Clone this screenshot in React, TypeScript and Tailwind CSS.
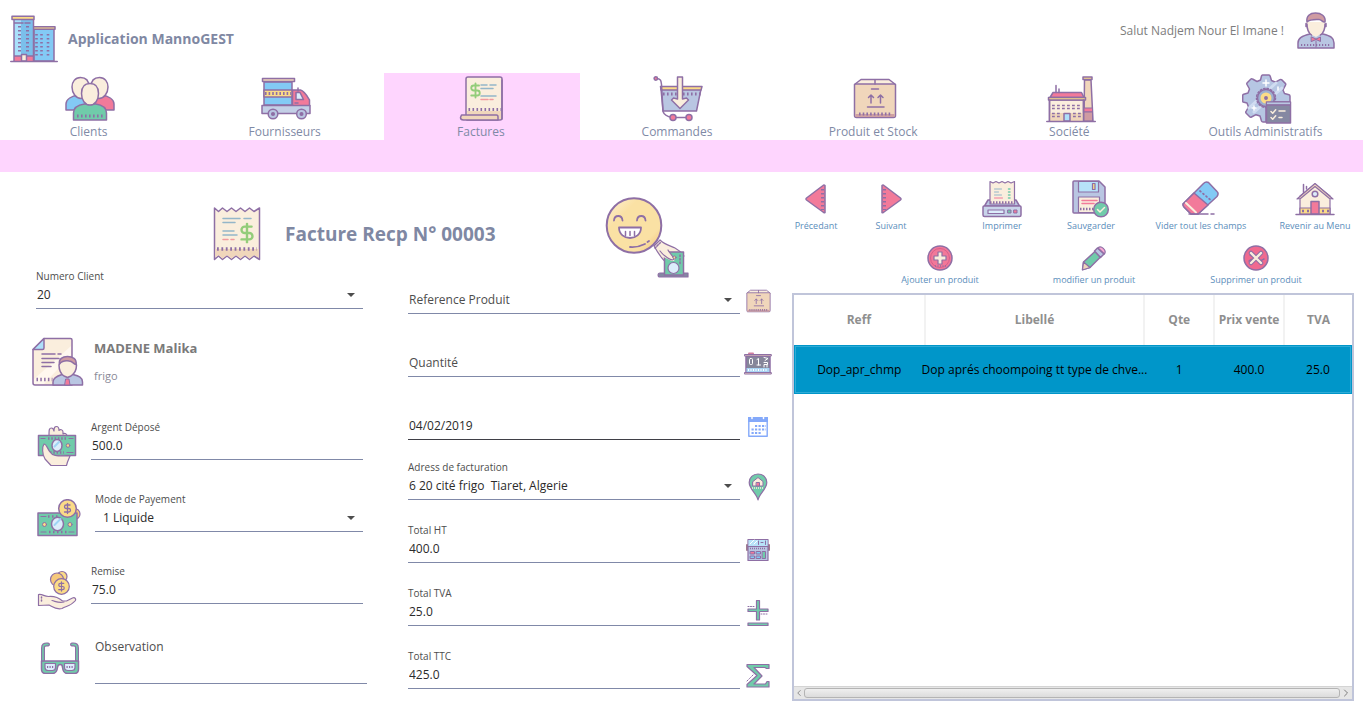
import type { ReactNode } from "react";
import { ChevronLeft, ChevronRight, DollarSign } from "lucide-react";

const INK = "#8e6fa5";
const CREAM = "#faeedd";
const SAND = "#f0d6bb";
const SKY = "#83caf5";
const PALE = "#dcedfb";
const PINK = "#f27a9a";
const GREEN = "#70cbaa";
const GOLD = "#fbdb87";
const STEEL = "#b9c6e2";

function Svg({ w, h, children }: { w: number; h: number; children: ReactNode }) {
  return (
    <svg
      width={w}
      height={h}
      viewBox={`0 0 ${w} ${h}`}
      fill="none"
      stroke={INK}
      strokeWidth={1.5}
      strokeLinejoin="round"
      strokeLinecap="round"
      aria-hidden="true"
      className="block shrink-0"
    >
      {children}
    </svg>
  );
}

function Dashes({ d, width = 3, dash = "1.6 2.4", color = INK }: { d: string; width?: number; dash?: string; color?: string }) {
  return <path d={d} strokeWidth={width} strokeDasharray={dash} strokeLinecap="butt" stroke={color} />;
}

function Dollar({ x, y, size, color }: { x: number; y: number; size: number; color: string }) {
  return <DollarSign x={x} y={y} width={size} height={size} color={color} strokeWidth={2.6} />;
}

const BuildingIcon = () => (
  <Svg w={48} h={48}>
    <path d="M24 14h20v32H24z" fill={SKY} />
    <path d="M23 11.7h22v2.6H23z" fill={GOLD} />
    <path d="M4 5h19.500v41H4z" fill="#7bbfeb" stroke="none" />
    <path d="M4 5h7v36H4z" fill="#a9e0fb" stroke="none" />
    <path d="M4 41h19.500v5H4z" fill={PINK} stroke="none" />
    <path d="M4 5v41M23.500 5v41M5 8h8M15 8h5M4 41h7M15 41h8" />
    <path d="M2 1.200h22v3.200H2z" fill={GOLD} />
    <path d="M11.500 39.500h5V46h-5z" fill={CREAM} />
    <Dashes d="M9.500 11v27M17.500 11v27" dash="1.500 2.500" width={3} />
    <Dashes d="M26.500 19v23M31.500 19v23M38 19v23" dash="1.500 2.500" width={2.600} />
    <path d="M.8 46.500h46.500" />
  </Svg>
);

const PersonIcon = () => (
  <Svg w={38} h={38}>
    <path d="M1 36v-5c0-5 4-7 12-9h13c8 2 11 4 11 9v5z" fill={STEEL} />
    <path d="M13 22c-3-2-4-6-3.500-12h18.500c.5 6-1 10-4 12l-5 3z" fill={CREAM} stroke="none" />
    <path d="M10 12c0 5 1.500 9 4.500 11M28 12c0 5-1.500 9-4.500 11M9 11.500v3M29 11.500v3" />
    <path d="M10 10C9 4 13 1 18.500 1S29 4 28 10c-3 .5-3-2.500-6-2.500-5 0-9-.5-12 2.500z" fill="#cf9ba2" />
    <path d="M14.500 25l4.500 2 4.500-2v4.500l-4.500-2-4.500 2z" fill={PINK} strokeWidth={1} />
    <Dashes d="M4 33h30" dash="1.200 1.800" width={2} />
    <path d="M19 29v6" strokeWidth={1} />
  </Svg>
);

const ClientsIcon = () => (
  <Svg w={50} h={46}>
    <path d="M1 34v-6c0-5 6-8 12-9l8 4v11z" fill={SKY} />
    <path d="M49 34v-6c0-5-6-8-12-9l-8 4v11z" fill={PINK} />
    <path d="M15.500 1.500C10 1.500 7 6 7 11c0 6 4 11.500 9 11.500S24 17 24 11c0-6-3-9.500-8.500-9.500z" fill={CREAM} />
    <path d="M34.500 1.500C40 1.500 43 6 43 11c0 6-4 11.500-9 11.500S26 17 26 11c0-6 3-9.500 8.500-9.500z" fill={CREAM} />
    <path d="M8.500 44V37c0-5 4-8 11-9h11c7 1 11 4 11 9v7z" fill={GREEN} />
    <path d="M25 7.500c-6 0-8.500 4.500-8.500 10C16.500 24 20 29 25 29s8.500-5 8.500-11.500c0-5.500-2.500-10-8.500-10z" fill={CREAM} />
    <Dashes d="M12 40h27" />
  </Svg>
);

const TruckIcon = () => (
  <Svg w={50} h={43}>
    <path d="M3 5h28v23H3z" fill={SKY} />
    <path d="M1.500 1.500h32v3h-32z" fill={SAND} />
    <path d="M3 13h28v7H3z" fill={GOLD} />
    <Dashes d="M4 16.500h26" dash="1.600 2" />
    <path d="M31.500 13h8c4 1 6 5 9 10v6h-17z" fill={PINK} />
    <path d="M35 15.500h4l3.500 7H35z" fill={PALE} />
    <path d="M1 28.500h48v8H1z" fill="#c3cfe6" />
    <path d="M37 11v3M34 26h3" />
    <circle cx="12" cy="37" r="4.800" fill={STEEL} />
    <circle cx="40.500" cy="37" r="4.800" fill={STEEL} />
    <circle cx="12" cy="37" r="1.300" fill={INK} />
    <circle cx="40.500" cy="37" r="1.300" fill={INK} />
  </Svg>
);

const InvoiceIcon = () => (
  <Svg w={46} h={46}>
    <path d="M7 40V3c0-1.500.5-2 2-2h32c1.500 0 2 .5 2 2v39c0 1.500-.5 2-2 2H8z" fill={CREAM} />
    <path d="M8 35h34v8H9z" fill={SAND} stroke="none" />
    <path d="M43 4v39" />
    <Dollar x={8} y={6} size={17} color="#93cd7a" />
    <path d="M22 9h6M31 9h6M22 12.500h12M22 20h15" stroke="#94b6c9" />
    <path d="M22 23.500h7M31 23.500h3" stroke="#f19a9f" />
    <Dashes d="M9.500 33.500h33" dash="1.600 2.400" />
    <path d="M2.500 39h35c1 0 1.500 1 1.500 2v3H4.500C2 44 1.500 43 1.500 41.500z" fill={SAND} />
  </Svg>
);

const CartIcon = () => (
  <Svg w={50} h={46}>
    <path d="M8 13h40l-4.500 22H10z" fill={STEEL} />
    <path d="M7.500 10.500h41.500l-1 3.500H8z" fill={GOLD} />
    <path d="M4 2.500c4 .5 4 2 4.500 6l1.500 27c1 3 4 5 9 6h16" />
    <circle cx="2.800" cy="2.500" r="1.700" fill={PINK} />
    <Dashes d="M10 18h38" dash="1.600 2.400" />
    <path d="M24.500 1h5v22l4-1 2 2-8.500 8.500L18.500 24l2-2 4 1z" fill={CREAM} />
    <circle cx="20" cy="41.500" r="3" fill={PINK} />
    <circle cx="36" cy="41.500" r="3" fill={PINK} />
  </Svg>
);

const BoxIcon = ({ w = 44, h = 41 }: { w?: number; h?: number }) => (
  <svg width={w} height={h} viewBox="0 0 44 41" fill="none" stroke={INK} strokeWidth="1.500" strokeLinejoin="round" strokeLinecap="round" aria-hidden="true" className="block shrink-0">
    <path d="M1.500 6.500L8 1.500h28l6.500 5" fill={CREAM} />
    <path d="M1.500 7c0-.8.500-1 1.500-1h38c1 0 1.500.2 1.500 1v30.500c0 1.500-.5 2-2 2h-37c-1.500 0-2-.5-2-2z" fill={SAND} />
    <path d="M2.500 36h39v3h-39z" fill="#cfa0a2" stroke="none" />
    <path d="M22 2v4M18.500 11h7M14.500 29h16.500M18 25v-8M27.500 25v-8M15.500 19.500L18 17l2.500 2.500M25 19.500l2.500-2.500 2.500 2.500" />
    <Dashes d="M6 36h33" dash="1.600 2.100" />
  </svg>
);

const FactoryIcon = () => (
  <Svg w={50} h={48}>
    <path d="M38.500 5h6.500l2 41h-9z" fill={SAND} />
    <path d="M38 33h8.500v4H38z" fill={PINK} strokeWidth={1} />
    <path d="M38 37h8.500v9H38z" fill="#cf9ba2" strokeWidth={1} />
    <path d="M37 2h9v2.500h-9z" fill={GOLD} />
    <path d="M7 17.500h28.500l2.500 5H4z" fill={PINK} />
    <path d="M3.500 25h34v21h-34z" fill={CREAM} />
    <path d="M4 38h33v8H4z" fill={SAND} stroke="none" />
    <path d="M2.500 22.500h37v2.500h-37z" fill={GOLD} />
    <path d="M3.500 25v21M37.500 25v21M10 10.500v7M13 14v3.500" />
    <Dashes d="M6 30.500h30M6 33.500h30M6 38.500h10M27 38.500h9M6 41.500h10M27 41.500h9" dash="2.800 2.200" width={1.700} />
    <path d="M18 38.500h6V46h-6z" fill="#aee0fa" />
    <path d="M.8 46.500h48.500" />
  </Svg>
);

const GearIcon = () => (
  <Svg w={50} h={50}>
    <path
      d="M20.500 1h6.500c.8 0 1 .5 1.200 1.200l1.300 4.300 4 1.700 4.500-2.500c.8-.4 1.300-.3 1.800.2l3.500 3.500c.6.600.6 1.200.2 1.800L41 16l1.500 3.500 4.500 1.300c.8.300 1 .7 1 1.400V28H24v20h-3c-.8 0-1.200-.3-1.500-1L18 42l-4-1.300L9.500 43c-.8.400-1.300.3-1.800-.2l-3.500-3.500c-.6-.6-.6-1.200-.2-1.800l2.500-4.500L5 29l-4-1c-.2 0-.3-.5-.3-1.200v-5.300c0-.7.300-1 1-1.200L6 19l1.500-4L5 10.500c-.4-.8-.3-1.300.2-1.800l3.500-3.500c.6-.6 1.200-.6 1.800-.2L15 7.500l3.500-1.500 1-4c.2-.7.500-1 1-1z"
      fill="#b6c6e3"
    />
    <path d="M7 34L34 9M12 38L40 14" stroke="#d0dcf1" strokeWidth={3} />
    <path d="M24 6v6M21 9h6M36 13v3M12 32v4M10 34h4" stroke="#fff" />
    <circle cx="24" cy="24" r="8.500" fill="#9dafd0" />
    <circle cx="24" cy="24" r="9.500" strokeDasharray="1.500 2" />
    <circle cx="24" cy="24" r="4.500" fill={GOLD} stroke={GOLD} strokeWidth={2} />
    <circle cx="24" cy="24" r="1.200" fill={INK} />
    <path d="M24.500 28h24v21h-24z" fill="#8588a2" />
    <path d="M25 28.500h23v2H25z" fill={STEEL} stroke="none" />
    <path d="M25 31h23" />
    <path d="M29 37.500l1.700 1.700 3-3.500M37 37h6M29 43.500l1.700 1.700 3-3.500M37 43.500h3" stroke={CREAM} />
  </Svg>
);

const ReceiptIcon = () => (
  <Svg w={48} h={56}>
    <path d="M1.500 2l4 3.500 4-3.500 4.500 3.500L18.500 2l4.500 3.500L27.500 2l4.500 3.500L36.500 2l4.500 3.500L46.500 2v51.500L41 50l-4.500 3.500L32 50l-4.500 3.500L23 50l-4.500 3.500L14 50l-4.500 3.500-4-3.500-4 3.500z" fill={CREAM} />
    <path d="M2.300 43h43.500v8.500L41 49l-4.500 3.500L32 49l-4.500 3.500L23 49l-4.500 3.500L14 49l-4.500 3.500-4-3.500-3.200 2z" fill={SAND} stroke="none" />
    <path d="M10 12.500h17M31 12.500h7M10 16.500h12M10 25h11M10 29h14" stroke="#94b6c9" />
    <path d="M10 33.500h5M18 33.500h3" stroke="#f19a9f" />
    <Dollar x={23} y={16} size={22} color="#93cd7a" />
    <Dashes d="M4 43h40" width={3.600} dash="1.800 2.600" />
  </Svg>
);

const SmileyCashIcon = () => (
  <Svg w={88} h={82}>
    <defs>
      <linearGradient id="face" x1="0" y1="0" x2="1" y2="1">
        <stop offset="0" stopColor="#fdf0d8" />
        <stop offset=".3" stopColor="#fae1a4" />
        <stop offset=".75" stopColor="#fae1a4" />
        <stop offset="1" stopColor="#f1bd72" />
      </linearGradient>
    </defs>
    <path d="M49 49l6-6c5 5 11 6 15 8 4 2 6 4 9 8l-16 8c-6-4-10-11-14-18z" fill={CREAM} strokeWidth={1.200} />
    <path d="M50 51l6-6" strokeDasharray="1.500 1.500" />
    <path d="M55 76h28v4H55c-2.500 0-2.500-4 0-4z" fill="#8588a2" strokeWidth={1.200} />
    <path d="M59.500 55h19v23h-19z" fill={GREEN} />
    <circle cx="68.500" cy="71" r="5.500" fill={PALE} strokeWidth={1.200} />
    <path d="M57 50c4 1 6 4 9 7l4 5c0 2-3 3-5 1l-9-4z" fill={CREAM} stroke="none" />
    <path d="M63 53c2 4 5 6 6 9-2 3-10-3-14-8" strokeWidth={1.200} />
    <circle cx="69.500" cy="60.500" r="1.500" fill={GOLD} strokeWidth={1} />
    <path d="M75 58v10" strokeDasharray="1.500 2" />
    <circle cx="29" cy="28.500" r="27.300" fill="url(#face)" strokeWidth={2} />
    <path d="M9 23.500c.5-6 8-6 8.500 0M32 23.500c.5-6 8-6 8.500 0M25 50c6 .5 10-.5 15-3M42.500 45l1.500-1" strokeWidth={1.800} />
    <path d="M14 30.500h22c0 14-22 14-22 0z" fill="#fff" strokeWidth={1.800} />
    <path d="M20.500 34.500v4M25 34.500v4M29.500 34.500v4" strokeWidth={1.500} />
  </Svg>
);

const ArrowIcon = ({ flip = false }: { flip?: boolean }) => (
  <Svg w={22} h={30}>
    <g transform={flip ? "matrix(-1 0 0 1 22 0)" : undefined}>
      <path d="M20 1.500v27c-1 .5-1.500 0-2-.5L1.500 16c-.7-.6-.7-1.400 0-2L18 1.500c.5-.5 1.500-.5 2 0z" fill={PINK} />
      <Dashes d="M17.500 5v21" width={3} dash="1.500 2.500" />
    </g>
  </Svg>
);

const PrinterIcon = () => (
  <Svg w={40} h={38}>
    <path d="M6 20h28l3.500 6H2.500z" fill={STEEL} />
    <path d="M2 26h36c.7 0 1 .5 1 1v8c0 1-.5 1.500-1.500 1.500h-35C1.500 36.500 1 36 1 35v-8c0-.5.300-1 1-1z" fill="#c8d4ea" />
    <path d="M8 24V1.500l3 1.500 3-1.500L17 3l3-1.500L23 3l3-1.500L29 3l3.500-1.500V24z" fill={CREAM} strokeWidth={1.200} />
    <path d="M12.500 9h7M12.500 12h4M12.500 15h7" stroke="#94b6c9" strokeWidth={1} />
    <path d="M12.500 18h8" stroke={PINK} strokeWidth={1} />
    <path d="M26.500 9h1.500M26.500 12h1.500M26.500 15h1.500M26.500 18h1.500" stroke={GREEN} />
    <Dashes d="M8 22.500h25" width={2.500} dash="1.500 1.500" />
    <path d="M6 30h16v3.500H6z" fill={PALE} strokeWidth={1.200} />
    <path d="M26 30h3v3h-3z" fill={GREEN} strokeWidth={1} />
    <path d="M32 30h3v3h-3z" fill={PINK} strokeWidth={1} />
  </Svg>
);

const SaveIcon = () => (
  <Svg w={38} h={38}>
    <path d="M2 1h25l6 6v26H2c-.7 0-1-.3-1-1V2c0-.7.300-1 1-1z" fill={STEEL} />
    <path d="M6.500 1.500h20v10.500h-20z" fill="#b7e2f8" strokeWidth={1.200} />
    <path d="M20.500 3.500h2.500v6h-2.500z" fill={GOLD} strokeWidth={1.200} />
    <path d="M6.500 17h21v15.500h-21z" fill={CREAM} strokeWidth={1.200} />
    <path d="M10 20.500h15M10 23.500h12" stroke={PINK} />
    <Dashes d="M8 29h14" width={2.500} dash="1.500 1.500" />
    <circle cx="29" cy="29.500" r="7.300" fill={GREEN} />
    <path d="M25.500 29.500l2.500 2.500 4.500-4.500" stroke={CREAM} />
  </Svg>
);

const EraserIcon = () => (
  <Svg w={38} h={36}>
    <path d="M1 23L21.500 2.500c1.500-1.500 3-2 5-1l8.500 9c1.500 1.500 1.500 3 0 5L16 33H9L2 26c-1-1-1-2-1-3z" fill={SKY} />
    <path d="M1 23l11-11 14 12-10 9H9L2 26c-1-1-1-2-1-3z" fill={PINK} />
    <path d="M4 22l10 9.500" stroke={CREAM} strokeWidth={2} />
    <path d="M18 10l10 8.500" strokeDasharray="1 3" strokeWidth={1.800} />
    <path d="M7 33h19M29 33h3" />
  </Svg>
);

const HomeIcon = () => (
  <Svg w={40} h={34}>
    <path d="M5 14L20 2l15 12v18H5z" fill={CREAM} strokeWidth={1.200} />
    <path d="M5 26h30v6H5z" fill={GOLD} strokeWidth={1.200} />
    <Dashes d="M7 29h27" width={2.500} dash="2 3" />
    <path d="M2 17L20 1.500 38 17l-3.500-.5L20 4.500 5.500 16.500z" fill={SAND} strokeWidth={1.200} />
    <path d="M8.500 10.500v-8M11.500 7v-2.500" />
    <circle cx="20" cy="12" r="2.800" fill={PALE} />
    <path d="M16 19.500h8V32h-8z" fill={PINK} />
    <path d="M1 32.500h38" />
  </Svg>
);

const AddIcon = () => (
  <Svg w={26} h={26}>
    <circle cx="13" cy="13" r="12" fill="#f27899" />
    <circle cx="13" cy="13" r="9.500" strokeWidth={1} stroke="#d65f8d" />
    <Dashes d="M8 21h11" width={1.500} dash="1 1.500" />
    <path d="M11 7h4v4h4v4h-4v4h-4v-4H7v-4h4z" fill={CREAM} strokeWidth={1.200} />
  </Svg>
);

const PencilIcon = () => (
  <Svg w={26} h={26}>
    <path d="M2.500 17L14 6.500l5.500 5.500L9 22.500l-7.500 2z" fill={GREEN} />
    <path d="M2.500 17l6.500 5.500-7.500 2.500z" fill={SAND} strokeWidth={1.200} />
    <path d="M13.500 6l3-3 6.500 6-3.500 3.500z" fill={STEEL} />
    <path d="M17 3c3-3 9 2 6.500 6z" fill="#f7a8d4" strokeWidth={1.200} />
  </Svg>
);

const DeleteIcon = () => (
  <Svg w={26} h={26}>
    <circle cx="13" cy="13" r="12" fill="#f06a90" />
    <path d="M6 16l3-2M17 16l4-2M7 10l3 2" strokeDasharray="1 1" />
    <path d="M8 8l10 10M18 8L8 18" strokeWidth={4.500} />
    <path d="M8 8l10 10M18 8L8 18" stroke={CREAM} strokeWidth={2.400} />
  </Svg>
);

const ProfileIcon = () => (
  <Svg w={52} h={50}>
    <path d="M12 1.500h26.500c1 0 1.500.5 1.500 1.500v45H3c-1.500 0-2-.5-2-2V12.500z" fill={CREAM} />
    <path d="M2 42l37-33v9L12 47H2z" fill="#fff8ef" stroke="none" />
    <path d="M12 1.500V11c0 1-.5 1.500-1.500 1.500H1z" fill="#aee0fa" />
    <path d="M10 17h13M26 17h3M10 21.500h17M10 25.500h12M10 29.500h9" />
    <Dashes d="M4.500 42.500h16" dash="1.500 2.300" width={3.500} />
    <path d="M21 48v-3c0-4 4-6 9-7.500h11c6 1.500 9.500 3 9.500 7.500v3z" fill={STEEL} />
    <path d="M32 36l3.500 4 4-4v-4h-7.500z" fill={CREAM} stroke="none" />
    <path d="M27 28c0 5 2 9 5 11l3.500 1.500L39 39c3-2 5.500-6 5.500-11l-2-5H29z" fill={CREAM} />
    <path d="M27.500 27c-1-5 3-7.500 8-7.500s9.500 2.500 8.500 8c-3-.5-3-3.500-7-3.500-4-.5-7 0-9.500 3z" fill="#cf9ba2" />
    <path d="M34 42h3l1 6h-5z" fill={PINK} strokeWidth={1} />
  </Svg>
);

const DepositIcon = () => (
  <Svg w={40} h={42}>
    <path d="M12 11c0-6 0-8 2.500-8C16 3 16.500 4 17 6c0-3 .5-4.500 2.500-4.500S22 3 22 5.500c1-1.500 4-1 4 1.500v2c2-1.500 4 0 4 2z" fill={CREAM} strokeWidth={1.200} />
    <path d="M1.500 10.500h37v20h-37z" fill={GREEN} />
    <path d="M4 13.500h4M32 13.500h4M30 27.500h6" strokeWidth={1.200} />
    <Dashes d="M11 13.500h18M13 27.500h14" width={2.500} dash="1.500 1.800" />
    <ellipse cx="20" cy="20.500" rx="5" ry="6" fill={PALE} />
    <path d="M17.500 21.500l4.500-4.500" stroke="#9fd4f5" strokeWidth={2} />
    <circle cx="31" cy="20.500" r="1.800" fill={GOLD} strokeWidth={1} />
    <path d="M7 19c2.500 0 3 4 6 8 3 5 10 3.500 20 4l-2.500 6-1 3.500H14L8 34c-3-5-3-12-1-15z" fill={CREAM} strokeWidth={1.200} />
  </Svg>
);

const PaymentIcon = () => (
  <Svg w={44} h={38}>
    <circle cx="37.500" cy="15" r="5.500" fill="#f6c87c" strokeWidth={1.200} />
    <path d="M1 14h39v22.500H1z" fill={GREEN} />
    <path d="M4 17.500h5M4 33h5M32 33h5" strokeWidth={1.200} />
    <Dashes d="M11 17.500h12M12 33h18" width={2.500} dash="1.500 2.500" />
    <ellipse cx="20.500" cy="25" rx="6" ry="6.800" fill={PALE} />
    <path d="M17.500 26l6-6" stroke="#9fd4f5" strokeWidth={2} />
    <circle cx="7.500" cy="25.500" r="2" fill={GOLD} strokeWidth={1} />
    <circle cx="33" cy="25.500" r="2" fill={GOLD} strokeWidth={1} />
    <circle cx="30.500" cy="9.500" r="8.800" fill={GOLD} />
    <Dollar x={24.500} y={3.500} size={12} color={INK} />
  </Svg>
);

const DiscountIcon = () => (
  <Svg w={40} h={40}>
    <circle cx="25" cy="6.500" r="5" fill={GOLD} strokeWidth={1.200} />
    <circle cx="20" cy="9.500" r="6.500" fill="#f6c87c" strokeWidth={1.200} />
    <circle cx="24.500" cy="16.500" r="7.800" fill={GOLD} strokeWidth={1.200} />
    <Dollar x={19} y={11} size={11} color={INK} />
    <path d="M1.500 24.500c5-.5 5 2 10 2 5-.5 10 1 14 4.500h4l6-3c2.500-1 4 1 2.500 3-4 5-9 5-13 7.500-6 1.500-9-1.500-13-3.500l-10.500.5z" fill={CREAM} strokeWidth={1.200} />
    <path d="M15 30.500c4 1 7 3 12 1.500" strokeWidth={1.200} />
    <path d="M4.500 27v6" strokeDasharray="1 2" />
  </Svg>
);

const GlassesIcon = () => (
  <Svg w={40} h={32}>
    <path d="M8 2.500C4 2 3 3.500 3 6v16M32 2.500c4-.5 5 1 5 3.500v16" strokeWidth={4} />
    <path d="M8 2.500C4 2 3 3.500 3 6v16M32 2.500c4-.5 5 1 5 3.500v16" stroke={GREEN} strokeWidth={1.600} />
    <path d="M1.500 19h37v8c0 3-1.500 4.500-4 4.500h-7c-3 0-4.500-2-5-6 0-4-4.500-4-5 0-.5 4-2 6-5 6h-7c-2.500 0-4-1.500-4-4.500z" fill={GREEN} />
    <path d="M5 21.500h10.500v4c0 2-1 3-3 3H8c-2 0-3-1-3-3zM24.500 21.500H35v4c0 2-1 3-3 3h-4c-2 0-3.500-1-3.500-3z" fill={PALE} strokeWidth={1.200} />
    <Dashes d="M7 25h7M26.500 25h7" width={2} dash="1.200 1.300" />
  </Svg>
);

const CounterIcon = () => (
  <Svg w={28} h={24}>
    <path d="M5 1.500h4" stroke="#d27ea0" strokeWidth={2} />
    <path d="M2 4h24v16H2z" fill="#85869a" />
    <path d="M2.500 16h23v4h-23z" fill="#a9d4f4" stroke="none" />
    <Dashes d="M4 18h20" width={2} dash="1 1.500" color="#fff" />
    <path d="M.8 2.500h26.500v1.500H.8zM.8 20.500h26.500V22H.8z" fill={SAND} strokeWidth={1} />
    <rect x="5.500" y="6.500" width="3" height="6" stroke="#fff" strokeWidth={1} rx="1" />
    <path d="M13 7.500l1.500-1v6.500M13 13h3.500" stroke="#fff" strokeWidth={1} />
    <path d="M20 5.500l4 1-3 2M20 10.500h3.500v2H20v2.500M23 12.500V15" stroke="#fff" strokeWidth={1} />
  </Svg>
);

const CalendarIcon = () => (
  <Svg w={20} h={20}>
    <path d="M.8 2h18.400v17.200H.8z" fill="#fff" stroke="#84a9fa" strokeWidth={1.400} />
    <path d="M0 0h20v5H0z" fill="#84a9fa" stroke="none" />
    <path d="M4 .5v1M15.500.5v1" stroke="#fff" />
    <path d="M7 9h11M3.500 12.500H18M3.500 16H14" stroke="#84a9fa" strokeWidth={2} strokeLinecap="butt" strokeDasharray="2.200 1.300" />
  </Svg>
);

const PinIcon = () => (
  <Svg w={20} h={28}>
    <path d="M10 27C9 21 1.200 16 1.200 9.500 1.200 4.500 5 1 10 1s8.800 3.500 8.800 8.500C18.800 16 11 21 10 27z" fill={GREEN} strokeWidth={1.200} />
    <path d="M5 8.500l5-4 5 4v4.500H5z" fill={CREAM} strokeWidth={1} />
    <path d="M8.500 9.500h3V13h-3z" fill={PINK} strokeWidth={1} />
    <Dashes d="M4 15h12" width={1.500} dash="1 1" color={CREAM} />
  </Svg>
);

const CalculatorIcon = () => (
  <Svg w={24} h={24}>
    <path d="M1 7v5M23 7v5" stroke="#a07c8f" strokeWidth={2} />
    <path d="M2 1.500h20v21H2z" fill={STEEL} strokeWidth={1.200} />
    <path d="M2.500 2h19v6h-19z" fill="#b7e2f8" stroke="none" />
    <path d="M4 6l4-4M8 6l3-3" stroke="#fff" strokeWidth={1} />
    <path d="M12.500 3v3.500M15 4.500h2M19.500 3v3.500M2 8.500h20" strokeWidth={1} />
    <Dashes d="M4 10.500h16" width={1.500} dash="1 1" />
    <path d="M4.500 13.500h4v2.500h-4z" fill={PINK} strokeWidth={1} />
    <path d="M10.500 13.500h4v2.500h-4zM4.500 18h4v2.500h-4zM10.500 18h4v2.500h-4z" fill={SKY} strokeWidth={1} />
    <path d="M16.500 13.500h3v7h-3z" fill={GREEN} strokeWidth={1} />
  </Svg>
);

const PlusMinusIcon = () => (
  <Svg w={22} h={28}>
    <path d="M9.500 1.500h3V10h8.500v2.500h-8.500V21h-3v-8.500H1V10h8.500z" fill={GREEN} strokeWidth={1.200} />
    <path d="M1 24h20v2.500H1z" fill={GREEN} strokeWidth={1.200} />
    <path d="M1 7.500h7M14 15h7" strokeDasharray="1 1.500" strokeWidth={1} />
  </Svg>
);

const SigmaIcon = () => (
  <Svg w={26} h={26}>
    <path d="M2 1.500h22v4h-2.500L20 4.500H9l8 8.500-8 8h11.500l1.500-2.500h2v5.500H2v-2.500l10-9L2 3.500z" fill={GREEN} strokeWidth={1.200} />
    <path d="M2 18l7-7" strokeDasharray="1 1.500" strokeWidth={1} />
  </Svg>
);

type FieldProps = {
  id: string;
  label?: string;
  icon?: ReactNode;
  iconSide?: "left" | "right";
  indent?: boolean;
  children: ReactNode;
};

function Field({ id, label, icon, iconSide = "right", indent = false, children }: FieldProps) {
  return (
    <div className="flex h-10 items-end">
      {icon && iconSide === "left" && (
        <span className={`flex h-7 shrink-0 items-center pl-[5px] ${indent ? "w-[63px]" : "w-[59px]"}`}>{icon}</span>
      )}
      <div className="flex min-w-0 flex-1 flex-col">
        {label && (
          <label htmlFor={id} className="h-[14px] text-[10px] leading-[14px] text-[#4d4d4d]">
            {label}
          </label>
        )}
        {children}
      </div>
      {icon && iconSide === "right" && <span className="ml-1 flex h-[26px] w-7 shrink-0 items-center justify-center">{icon}</span>}
    </div>
  );
}

const controlClass =
  "h-[26px] w-full appearance-none rounded-none border-b bg-transparent px-px pb-0.5 text-[12px] outline-none placeholder:text-[#4d4d4d]";

function TextInput({ id, value, placeholder, dark = false }: { id: string; value?: string; placeholder?: string; dark?: boolean }) {
  return (
    <input
      id={id}
      type="text"
      defaultValue={value}
      placeholder={placeholder}
      aria-label={placeholder ?? (dark ? "Date" : undefined)}
      className={`${controlClass} text-[#2b2b2b] ${dark ? "border-[#3f3f46]" : "border-[#8089a8]"}`}
    />
  );
}

function Select({ id, value, muted = false, inset = false }: { id: string; value: string; muted?: boolean; inset?: boolean }) {
  return (
    <div className="relative">
      <select
        id={id}
        aria-label={muted ? value : undefined}
        className={`${controlClass} block border-[#8089a8] ${muted ? "text-[#4d4d4d]" : "text-[#2b2b2b]"} ${inset ? "pl-2" : ""}`}
      >
        <option>{value}</option>
      </select>
      <svg width="8" height="4" viewBox="0 0 8 4" aria-hidden="true" className="pointer-events-none absolute top-[10px] right-2">
        <path d="M0 0h8L4 4z" fill="#4d4d4d" />
      </svg>
    </div>
  );
}

const navItems = [
  { label: "Clients", icon: <ClientsIcon /> },
  { label: "Fournisseurs", icon: <TruckIcon /> },
  { label: "Factures", icon: <InvoiceIcon />, active: true },
  { label: "Commandes", icon: <CartIcon /> },
  { label: "Produit et Stock", icon: <BoxIcon /> },
  { label: "Société", icon: <FactoryIcon /> },
  { label: "Outils Administratifs", icon: <GearIcon /> },
];

function ToolButton({ label, icon, tall = false }: { label: string; icon: ReactNode; tall?: boolean }) {
  return (
    <button type="button" className="flex min-w-0 flex-col items-center">
      <span className={`flex items-center justify-center ${tall ? "h-[38px]" : "h-7"}`}>{icon}</span>
      <span className="mt-px text-[9px] leading-[14px] whitespace-nowrap text-[#5b8ebb]">{label}</span>
    </button>
  );
}

const columns = ["Reff", "Libellé", "Qte", "Prix vente", "TVA"];
const rows = [["Dop_apr_chmp", "Dop aprés choompoing tt type de chve...", "1", "400.0", "25.0"]];

function ProductTable() {
  return (
    <div className="flex flex-1 flex-col border-2 border-[#c0c5da] bg-white">
      <div className="flex-1 overflow-hidden">
        <table className="w-full table-fixed border-collapse text-[12px]">
          <colgroup>
            <col className="w-[23.4%]" />
            <col className="w-[39.4%]" />
            <col className="w-[12.5%]" />
            <col className="w-[12.5%]" />
            <col />
          </colgroup>
          <thead>
            <tr className="h-[50px]">
              {columns.map((c) => (
                <th key={c} className="border-r-2 border-[#f2f2f2] p-0 font-bold whitespace-nowrap text-[#8f8f8f] last:border-r-0">
                  {c}
                </th>
              ))}
            </tr>
          </thead>
          <tbody>
            {rows.map((r) => (
              <tr key={r[0]} className="h-[49px] bg-[#0096c9] text-black outline-1 -outline-offset-2 outline-[#2fabd6]">
                {r.map((cell, i) => (
                  <td key={i} className="p-0 whitespace-nowrap">
                    <div className="flex justify-center">
                      <span className="shrink-0">{cell}</span>
                    </div>
                  </td>
                ))}
              </tr>
            ))}
          </tbody>
        </table>
      </div>
      <div className="flex h-[13px] items-center border-t border-[#d4d4d4] bg-[#e6e6e6]">
        <button type="button" aria-label="Défiler à gauche" className="flex w-[10px] justify-center text-[#7d7d7d]">
          <ChevronLeft size={12} />
        </button>
        <div className="h-[10px] flex-1 rounded-[3px] border border-[#b4b4b4] bg-linear-to-b from-[#efefef] to-[#dcdcdc]" />
        <button type="button" aria-label="Défiler à droite" className="flex w-[12px] justify-center text-[#7d7d7d]">
          <ChevronRight size={12} />
        </button>
      </div>
    </div>
  );
}

export default function App() {
  return (
    <div className="flex min-h-screen flex-col overflow-hidden bg-white font-['Open_Sans','Noto_Sans',sans-serif]">
      <header className="flex h-[73px] items-start justify-between pr-7 pl-[10px]">
        <div className="flex items-center gap-[10px] pt-[15px]">
          <BuildingIcon />
          <h1 className="pb-0.5 text-[14px] font-bold text-[#7f88a3]">Application MannoGEST</h1>
        </div>
        <div className="flex items-center gap-[13px] pt-3">
          <span className="text-[12px] text-[#7d7d7d]">Salut Nadjem Nour El Imane !</span>
          <PersonIcon />
        </div>
      </header>

      <nav className="-mr-0.5 -ml-2 grid grid-cols-7">
        {navItems.map((item) => (
          <button
            key={item.label}
            type="button"
            aria-current={item.active ? "page" : undefined}
            className={`flex flex-col items-center ${item.active ? "bg-[#fed5fe]" : ""}`}
          >
            <span className="flex h-[51px] items-center">{item.icon}</span>
            <span className="pr-[3px] text-[12px] leading-4 text-[#7f8aa6]">{item.label}</span>
          </button>
        ))}
      </nav>
      <div className="h-8 bg-[#fed5fe]" />

      <main className="grid flex-1 grid-cols-[792fr_571fr]">
        <section className="min-w-0">
          <div className="flex h-24 items-start pl-[213px]">
            <div className="flex items-center gap-6 pt-[34px]">
              <ReceiptIcon />
              <h2 className="text-[19px] font-bold whitespace-nowrap text-[#7f88a3]">Facture Recp N° 00003</h2>
            </div>
            <div className="ml-auto pt-[25px] pr-[99px]">
              <SmileyCashIcon />
            </div>
          </div>

          <form className="grid grid-cols-[331fr_364fr] gap-x-[45px] pr-5 pl-8">
            <div className="flex flex-col gap-8 pt-px">
              <div className="pl-1">
                <Field id="client" label="Numero Client">
                  <Select id="client" value="20" />
                </Field>
              </div>
              <div className="-mt-1 flex h-[51px] gap-[10px]">
                <ProfileIcon />
                <div className="flex flex-col gap-[10px]">
                  <strong className="text-[13px] leading-[22px] text-[#7a7a7a]">MADENE Malika</strong>
                  <span className="text-[11px] leading-[14px] text-[#8a8a98]">frigo</span>
                </div>
              </div>
              <Field id="argent" label="Argent Déposé" icon={<DepositIcon />} iconSide="left">
                <TextInput id="argent" value="500.0" />
              </Field>
              <Field id="mode" label="Mode de Payement" icon={<PaymentIcon />} iconSide="left" indent>
                <Select id="mode" value="1 Liquide" inset />
              </Field>
              <Field id="remise" label="Remise" icon={<DiscountIcon />} iconSide="left">
                <TextInput id="remise" value="75.0" />
              </Field>
              <div className="-mr-1 flex h-12 items-start">
                <span className="flex h-11 w-[63px] shrink-0 items-center pl-2">
                  <GlassesIcon />
                </span>
                <textarea
                  aria-label="Observation"
                  placeholder="Observation"
                  className="h-12 min-w-0 flex-1 resize-none border-b border-[#8089a8] bg-transparent p-0 text-[12px] leading-[22px] outline-none placeholder:text-[#4d4d4d]"
                />
              </div>
            </div>

            <div className="flex flex-col gap-5 pt-[6px]">
              <div className="flex flex-col gap-[23px]">
                <Field id="reference" icon={<BoxIcon w={25} h={24} />}>
                  <Select id="reference" value="Reference Produit" muted />
                </Field>
                <Field id="quantite" icon={<CounterIcon />}>
                  <TextInput id="quantite" placeholder="Quantité" />
                </Field>
                <Field id="date" icon={<CalendarIcon />}>
                  <TextInput id="date" value="04/02/2019" dark />
                </Field>
              </div>
              <div className="flex flex-col gap-[23px]">
                <Field id="adresse" label="Adress de facturation" icon={<PinIcon />}>
                  <Select id="adresse" value={"6 20 cité frigo\u00a0 Tiaret, Algerie"} />
                </Field>
                <Field id="ht" label="Total HT" icon={<CalculatorIcon />}>
                  <TextInput id="ht" value="400.0" />
                </Field>
                <Field id="tva" label="Total TVA" icon={<PlusMinusIcon />}>
                  <TextInput id="tva" value="25.0" />
                </Field>
                <Field id="ttc" label="Total TTC" icon={<SigmaIcon />}>
                  <TextInput id="ttc" value="425.0" />
                </Field>
              </div>
            </div>
          </form>
        </section>

        <section className="flex min-w-0 flex-col pr-[9px] pb-[10px]">
          <div className="grid grid-cols-[48fr_102fr_120fr_58fr_162fr_66fr] pt-2 pr-[6px]">
            <ToolButton tall label="Précedant" icon={<ArrowIcon />} />
            <ToolButton tall label="Suivant" icon={<ArrowIcon flip />} />
            <ToolButton tall label="Imprimer" icon={<PrinterIcon />} />
            <ToolButton tall label="Sauvgarder" icon={<SaveIcon />} />
            <ToolButton tall label="Vider tout les champs" icon={<EraserIcon />} />
            <ToolButton tall label="Revenir au Menu" icon={<HomeIcon />} />
          </div>
          <div className="mb-[6px] grid grid-cols-[154fr_154fr_170fr] pt-[11px] pr-[13px] pl-[71px]">
            <ToolButton label="Ajouter un produit" icon={<AddIcon />} />
            <ToolButton label="modifier un produit" icon={<PencilIcon />} />
            <ToolButton label="Supprimer un produit" icon={<DeleteIcon />} />
          </div>
          <ProductTable />
        </section>
      </main>
    </div>
  );
}
